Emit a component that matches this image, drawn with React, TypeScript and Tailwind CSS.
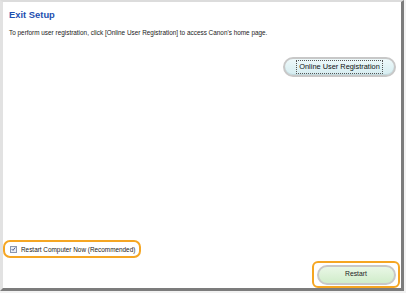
export default function App() {
  return (
    <div className="w-[406px] h-[293px] bg-[#f2f2f2] font-['Liberation_Sans',Arial,sans-serif]">
      <div className="w-[404px] h-[291px] flex flex-col bg-white border-t-2 border-l-[3px] border-r-[3px] border-b-[3px] border-t-[#dcdcdc] border-l-[#e2e2e2] border-r-[#7c7c7c] border-b-[#7c7c7c]">
        {/* Header */}
        <h1 className="pl-[6px] pt-[7px] text-[9.4px] font-bold leading-[11px] text-[#1d4fb0]">
          Exit Setup
        </h1>
        <p className="pl-[6px] pt-[9px] text-[6.4px] leading-[8px] text-[#222]">
          To perform user registration, click [Online User Registration] to access Canon's home page.
        </p>

        {/* Online registration button */}
        <div className="flex justify-end pr-[5px] pt-[20px]">
          <button className="w-[113px] h-[20px] flex items-center justify-center rounded-full border-2 border-[#c8c8c8] bg-gradient-to-b from-[#eef9fa] to-[#d6edf1] shadow-[inset_0_-1px_0_#c2dade]">
            <span className="px-[2px] border border-dotted border-[#555] text-[7.4px] leading-[12px] text-[#111]">
              Online User Registration
            </span>
          </button>
        </div>

        <div className="flex-1" />

        {/* Restart checkbox */}
        <div>
          <label className="inline-flex items-center gap-[4px] h-[18px] w-[138px] pl-[5px] rounded-[7px] border-2 border-[#f5a623]">
            <span className="w-[7px] h-[7px] flex items-center justify-center border border-[#8a97b0] bg-[#e7ecf5]">
              <svg viewBox="0 0 8 8" className="w-[6px] h-[6px]">
                <path d="M1.2 4.2 L3.2 6.2 L6.8 1.6" fill="none" stroke="#2a3d80" strokeWidth="1.3" />
              </svg>
            </span>
            <span className="text-[6.4px] leading-[9px] text-[#222]">Restart Computer Now (Recommended)</span>
          </label>
        </div>

        {/* Restart button */}
        <div className="flex justify-end pr-[1px] pt-[2px]">
          <div className="w-[88px] h-[27px] flex items-center justify-center rounded-[6px] border-2 border-[#f5a623]">
            <button className="w-[79px] h-[20px] rounded-full border-2 border-[#c8c8c8] bg-gradient-to-b from-[#e9f7e6] to-[#d0ecca] text-[6.8px] text-[#222]">
              Restart
            </button>
          </div>
        </div>
      </div>
    </div>
  );
}
